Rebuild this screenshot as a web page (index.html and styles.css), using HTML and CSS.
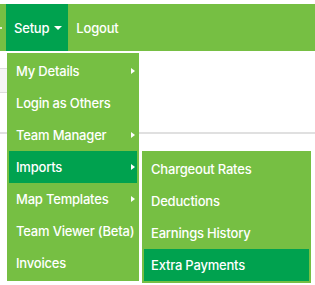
FILE: index.html
```html
<!DOCTYPE html>
<html>
<head>
<meta charset="utf-8">
<link rel="stylesheet" href="styles.css">
</head>
<body>
<header class="bar">
  <ul class="nav">
    <li class="nav-item edge"><span class="edge-mark"></span></li>
    <li class="nav-item setup">
      <a class="nav-link active">Setup <span class="caret"></span></a>
      <ul class="menu">
        <li class="menu-item"><a>My Details</a><span class="arrow"></span></li>
        <li class="menu-item"><a>Login as Others</a></li>
        <li class="menu-item"><a>Team Manager</a><span class="arrow"></span></li>
        <li class="menu-item open"><a>Imports</a><span class="arrow"></span>
          <ul class="menu submenu">
            <li class="menu-item"><a>Chargeout Rates</a></li>
            <li class="menu-item"><a>Deductions</a></li>
            <li class="menu-item"><a>Earnings History</a></li>
            <li class="menu-item open"><a>Extra Payments</a></li>
          </ul>
        </li>
        <li class="menu-item"><a>Map Templates</a><span class="arrow"></span></li>
        <li class="menu-item"><a>Team Viewer (Beta)</a></li>
        <li class="menu-item"><a>Invoices</a></li>
      </ul>
    </li>
    <li class="nav-item"><a class="nav-link">Logout</a></li>
  </ul>
</header>
<main class="content">
  <div class="band"></div>
  <div class="rule"></div>
</main>
</body>
</html>
```
FILE: styles.css
```css
* { box-sizing: border-box; }
html, body { margin: 0; padding: 0; background: #fff; }
html { height: 100%; }
body { min-height: 285px; height: 100%; font-family: "Inter", "Open Sans", sans-serif; font-size: 13px; font-weight: 500; letter-spacing: -0.2px; color: #fff; }
ul { list-style: none; margin: 0; padding: 0; }
a { color: #fff; text-decoration: none; display: block; white-space: nowrap; }

.bar { position: relative; z-index: 5; margin-top: 4px; height: 47px; background: #76bf43; }
.nav { display: flex; height: 100%; }
.nav-item { position: relative; height: 100%; }
.edge { width: 6px; display: flex; align-items: center; }
.edge-mark { width: 2px; height: 2px; background: #e6f3dc; margin-top: 1px; }
.nav-link { height: 100%; display: flex; align-items: center; padding: 0 9px 0 8px; }
.nav-link.active { background: #00a24f; padding-right: 6px; }
.caret { display: inline-block; width: 0; height: 0; margin-left: 5px; border-top: 4px solid #fff; border-left: 4px solid transparent; border-right: 4px solid transparent; }

.menu { position: absolute; top: 49px; left: 1px; width: 132px; padding: 2px; background: #76bf43; z-index: 10; }
.menu-item { position: relative; height: 32px; display: flex; align-items: center; justify-content: space-between; padding: 0 2px 0 7px; }
.menu-item.open { background: #00a24f; }
.arrow { width: 0; height: 0; border-left: 4px solid #fff; border-top: 3.5px solid transparent; border-bottom: 3.5px solid transparent; }
.submenu { top: 0; left: calc(100% + 5px); width: 169px; }

.content { position: relative; }
.band { margin-top: 17px; width: 120px; height: 25px; background: #f5f5f5; border-top: 1px solid #ddd; border-bottom: 1px solid #ddd; }
.rule { margin-top: 39px; height: 2px; background: #e0e0e0; }
```
